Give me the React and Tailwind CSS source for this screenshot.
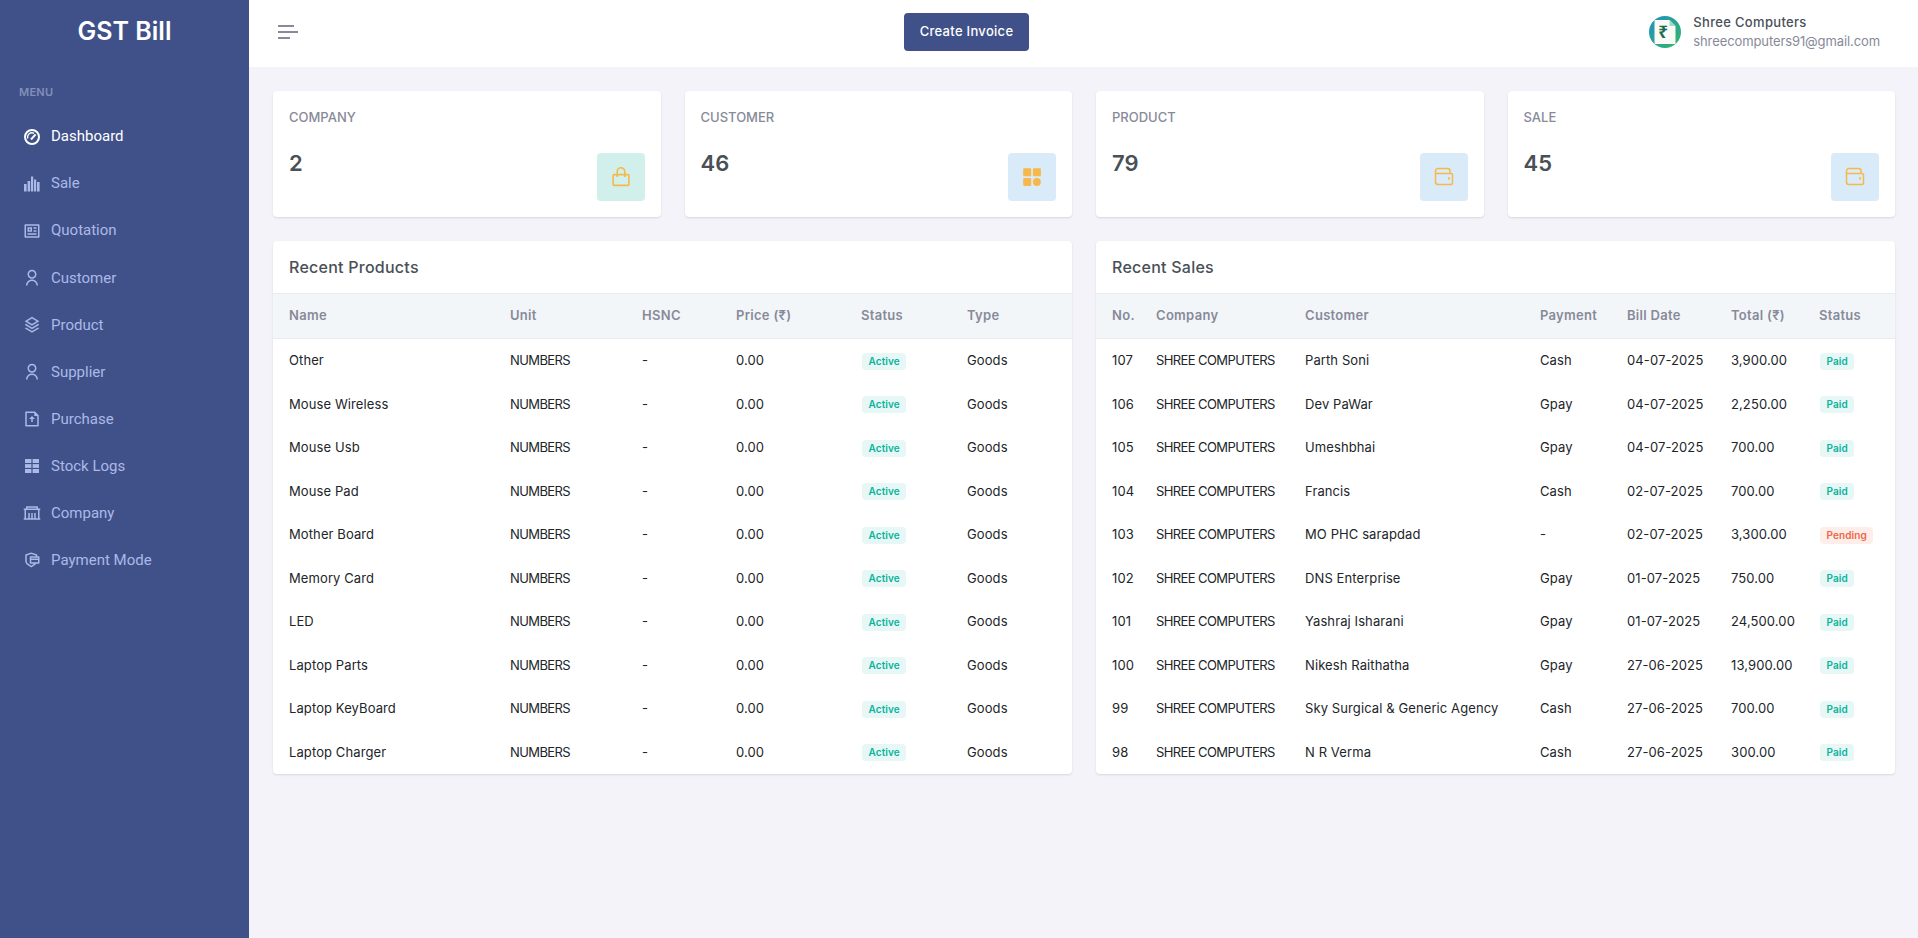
import { RiProfileLine, RiUserLine, RiStackLine, RiFileUploadLine, RiGovernmentLine, RiSecurePaymentLine } from "react-icons/ri";

const DashboardIcon = ({ size }) => (
  <svg width={size} height={size} viewBox="0 0 18 18" fill="none" stroke="currentColor">
    <circle cx="9" cy="9" r="7" strokeWidth="2" />
    <path d="M4.8 10.5a4.4 4.4 0 0 1 6.2-5.2" strokeWidth="1.3" />
    <path d="M8 11.5l4.6-5.2" strokeWidth="2" />
  </svg>
);

const SaleIcon = ({ size }) => (
  <svg width={size} height={size} viewBox="0 0 18 18" fill="currentColor">
    <rect x="1" y="9" width="2.6" height="7.5" />
    <rect x="4.6" y="6" width="2.6" height="10.5" />
    <rect x="8" y="1.5" width="2.2" height="15" />
    <rect x="11" y="4.5" width="2.2" height="12" />
    <rect x="14" y="7" width="2.6" height="9.5" />
  </svg>
);

const StockIcon = ({ size }) => (
  <svg width={size} height={size} viewBox="0 0 18 18" fill="currentColor">
    <rect x="2" y="2" width="6.4" height="4" />
    <rect x="9.6" y="2" width="6.4" height="4" />
    <rect x="2" y="7.1" width="6.4" height="3.8" />
    <rect x="9.6" y="7.1" width="6.4" height="3.8" />
    <rect x="2" y="12" width="6.4" height="4" />
    <rect x="9.6" y="12" width="6.4" height="4" />
  </svg>
);

const menu = [
  { label: "Dashboard", icon: DashboardIcon, active: true },
  { label: "Sale", icon: SaleIcon },
  { label: "Quotation", icon: RiProfileLine },
  { label: "Customer", icon: RiUserLine },
  { label: "Product", icon: RiStackLine },
  { label: "Supplier", icon: RiUserLine },
  { label: "Purchase", icon: RiFileUploadLine },
  { label: "Stock Logs", icon: StockIcon },
  { label: "Company", icon: RiGovernmentLine },
  { label: "Payment Mode", icon: RiSecurePaymentLine },
];

const BagIcon = () => (
  <svg width="20" height="20" viewBox="0 0 20 20" fill="none" stroke="#f7b84b" strokeWidth="1.6">
    <rect x="2.1" y="7.6" width="15.8" height="10.8" rx="0.8" />
    <path d="M6.2 10V4.6a3.8 3.8 0 0 1 7.6 0V10" />
  </svg>
);

const AppsIcon = () => (
  <svg width="20" height="20" viewBox="0 0 20 20" fill="#f7b84b">
    <rect x="1.2" y="1.2" width="8" height="8" rx="0.8" />
    <rect x="10.9" y="1.2" width="8" height="8" rx="0.8" />
    <rect x="1.2" y="10.9" width="8" height="8" rx="0.8" />
    <circle cx="14.9" cy="14.9" r="4" />
  </svg>
);

const WalletIcon = () => (
  <svg width="20" height="20" viewBox="0 0 20 20" fill="none" stroke="#f7b84b" strokeWidth="1.5">
    <path d="M1.5 4a2.5 2.5 0 0 1 2.5-2.5h9.5a2.5 2.5 0 0 1 2.5 2.5v2.5" />
    <path d="M1.5 4v11a2.5 2.5 0 0 0 2.5 2.5h13a1.5 1.5 0 0 0 1.5-1.5V8a1.5 1.5 0 0 0-1.5-1.5H1.5" />
    <path d="M15 10v2.8" />
  </svg>
);

const stats = [
  { label: "COMPANY", value: "2", icon: <BagIcon />, tile: "bg-[#d1f0eb]" },
  { label: "CUSTOMER", value: "46", icon: <AppsIcon />, tile: "bg-[#d9ebf8]" },
  { label: "PRODUCT", value: "79", icon: <WalletIcon />, tile: "bg-[#d9ebf8]" },
  { label: "SALE", value: "45", icon: <WalletIcon />, tile: "bg-[#d9ebf8]" },
];

const products = ["Other", "Mouse Wireless", "Mouse Usb", "Mouse Pad", "Mother Board", "Memory Card", "LED", "Laptop Parts", "Laptop KeyBoard", "Laptop Charger"];

const sales = [
  ["107", "Parth Soni", "Cash", "04-07-2025", "3,900.00", "Paid"],
  ["106", "Dev PaWar", "Gpay", "04-07-2025", "2,250.00", "Paid"],
  ["105", "Umeshbhai", "Gpay", "04-07-2025", "700.00", "Paid"],
  ["104", "Francis", "Cash", "02-07-2025", "700.00", "Paid"],
  ["103", "MO PHC sarapdad", "-", "02-07-2025", "3,300.00", "Pending"],
  ["102", "DNS Enterprise", "Gpay", "01-07-2025", "750.00", "Paid"],
  ["101", "Yashraj Isharani", "Gpay", "01-07-2025", "24,500.00", "Paid"],
  ["100", "Nikesh Raithatha", "Gpay", "27-06-2025", "13,900.00", "Paid"],
  ["99", "Sky Surgical & Generic Agency", "Cash", "27-06-2025", "700.00", "Paid"],
  ["98", "N R Verma", "Cash", "27-06-2025", "300.00", "Paid"],
];

function StatusBadge({ text }) {
  const soft = text === "Pending" ? "bg-[#fdeeea] text-[#f06548]" : "bg-[#e6f7f5] text-[#0ab39c]";
  return <span className={`inline-block rounded ml-[1px] px-[6.5px] py-[1px] text-[10px] leading-[15px] font-semibold align-middle ${soft}`}>{text}</span>;
}

function Th({ children }) {
  return <th className="pl-4 py-0 h-[45px] text-left text-[13px] font-semibold tracking-[0.3px] text-[#878a99] border-y border-[#e9ebec] whitespace-nowrap">{children}</th>;
}

function Td({ children, caps }) {
  return <td className={`pl-4 py-3 text-[13px] leading-[19.5px] text-[#212529] whitespace-nowrap ${caps ? "tracking-[-0.6px]" : "tracking-[0.1px]"}`}>{children}</td>;
}

function TableCard({ title, children }) {
  return (
    <div className="bg-white rounded shadow-[0_1px_2px_rgba(56,65,74,0.15)] overflow-hidden">
      <div className="h-[52px] px-4 flex items-center text-[16px] tracking-[0.25px] font-medium text-[#495057]">{title}</div>
      {children}
    </div>
  );
}

export default function App() {
  return (
    <div className="flex h-[938px] overflow-hidden bg-[#f3f3f9] font-['Inter',sans-serif]">
      <aside className="w-[249px] shrink-0 bg-[#405189]">
        <div className="h-[64px] flex items-center justify-center text-[25px] font-semibold text-white">GST Bill</div>
        <div className="mt-[20px] pl-[19px] text-[11px] leading-4 font-semibold tracking-wide text-[#838fb9]">MENU</div>
        <nav className="mt-[13px] font-['Roboto',sans-serif]">
          {menu.map(({ label, icon: Icon, active }) => (
            <div key={label} className={`h-[47.1px] pl-[23px] flex items-center gap-[10px] text-[15px] ${active ? "text-white" : "text-[#abb9e8]"}`}>
              <Icon size={18} />
              {label}
            </div>
          ))}
        </nav>
      </aside>

      <main className="flex-1 min-w-0">
        <header className="h-[67px] pb-[3px] bg-white flex items-center pl-[29px] pr-[38px]">
          <div className="w-[626px] flex flex-col gap-[4.4px]">
            <span className="h-[2px] w-4 bg-[#878a99]" />
            <span className="h-[2px] w-5 bg-[#878a99]" />
            <span className="h-[2px] w-3 bg-[#878a99]" />
          </div>
          <button className="w-[125px] h-[38px] rounded bg-[#405189] text-[13px] tracking-[0.3px] font-medium text-white">Create Invoice</button>
          <div className="ml-auto flex items-center gap-3">
            <svg width="32" height="32" viewBox="0 0 32 32" className="shrink-0">
              <defs>
                <linearGradient id="avatarBg" x1="0" y1="0" x2="1" y2="1">
                  <stop offset="0" stopColor="#1f8fc4" />
                  <stop offset="1" stopColor="#35b864" />
                </linearGradient>
              </defs>
              <circle cx="16" cy="16" r="16" fill="url(#avatarBg)" />
              <path d="M5.5 4h15l6 6v18h-21z" fill="#fafaf7" />
              <path d="M20.5 4l6 6h-6z" fill="#9fd8c0" />
              <text x="14" y="22" textAnchor="middle" fontSize="17" fontWeight="700" fill="#1c6b50" fontFamily="'Noto Sans','DejaVu Sans',sans-serif">₹</text>
            </svg>
            <div className="text-[13px] leading-[19.5px]">
              <div className="font-medium tracking-[0.33px] text-[#495057]">Shree Computers</div>
              <div className="tracking-[-0.1px] text-[#878a99]">shreecomputers91@gmail.com</div>
            </div>
          </div>
        </header>

        <div className="pt-6 pl-6 pr-[23px]">
          <div className="grid grid-cols-4 gap-6">
            {stats.map((s) => (
              <div key={s.label} className="h-[126px] bg-white rounded shadow-[0_1px_2px_rgba(56,65,74,0.15)] pt-[17px] px-4">
                <div className="text-[13px] leading-[19.5px] font-medium text-[#878a99]">{s.label}</div>
                <div className="flex justify-between mt-[19px]">
                  <div className="text-[22px] leading-[33px] font-semibold text-[#495057]">{s.value}</div>
                  <div className={`w-12 h-12 rounded mt-[6.5px] flex items-center justify-center ${s.tile}`}>{s.icon}</div>
                </div>
              </div>
            ))}
          </div>

          <div className="grid grid-cols-2 gap-6 mt-6">
            <TableCard title="Recent Products">
              <table className="w-full table-fixed border-collapse">
                <colgroup>
                  <col className="w-[221px]" />
                  <col className="w-[132px]" />
                  <col className="w-[94px]" />
                  <col className="w-[125px]" />
                  <col className="w-[106px]" />
                  <col />
                </colgroup>
                <thead className="bg-[#f3f6f9]">
                  <tr>
                    <Th>Name</Th><Th>Unit</Th><Th>HSNC</Th><Th>Price (₹)</Th><Th>Status</Th><Th>Type</Th>
                  </tr>
                </thead>
                <tbody>
                  {products.map((name) => (
                    <tr key={name}>
                      <Td>{name}</Td><Td caps>NUMBERS</Td><Td>-</Td><Td>0.00</Td><Td><StatusBadge text="Active" /></Td><Td>Goods</Td>
                    </tr>
                  ))}
                </tbody>
              </table>
            </TableCard>

            <TableCard title="Recent Sales">
              <table className="w-full table-fixed border-collapse">
                <colgroup>
                  <col className="w-[44px]" />
                  <col className="w-[149px]" />
                  <col className="w-[235px]" />
                  <col className="w-[87px]" />
                  <col className="w-[104px]" />
                  <col className="w-[88px]" />
                  <col />
                </colgroup>
                <thead className="bg-[#f3f6f9]">
                  <tr>
                    <Th>No.</Th><Th>Company</Th><Th>Customer</Th><Th>Payment</Th><Th>Bill Date</Th><Th>Total (₹)</Th><Th>Status</Th>
                  </tr>
                </thead>
                <tbody>
                  {sales.map(([no, customer, payment, date, total, status]) => (
                    <tr key={no}>
                      <Td>{no}</Td><Td caps>SHREE COMPUTERS</Td><Td>{customer}</Td><Td>{payment}</Td><Td>{date}</Td><Td>{total}</Td><Td><StatusBadge text={status} /></Td>
                    </tr>
                  ))}
                </tbody>
              </table>
            </TableCard>
          </div>
        </div>
      </main>
    </div>
  );
}
